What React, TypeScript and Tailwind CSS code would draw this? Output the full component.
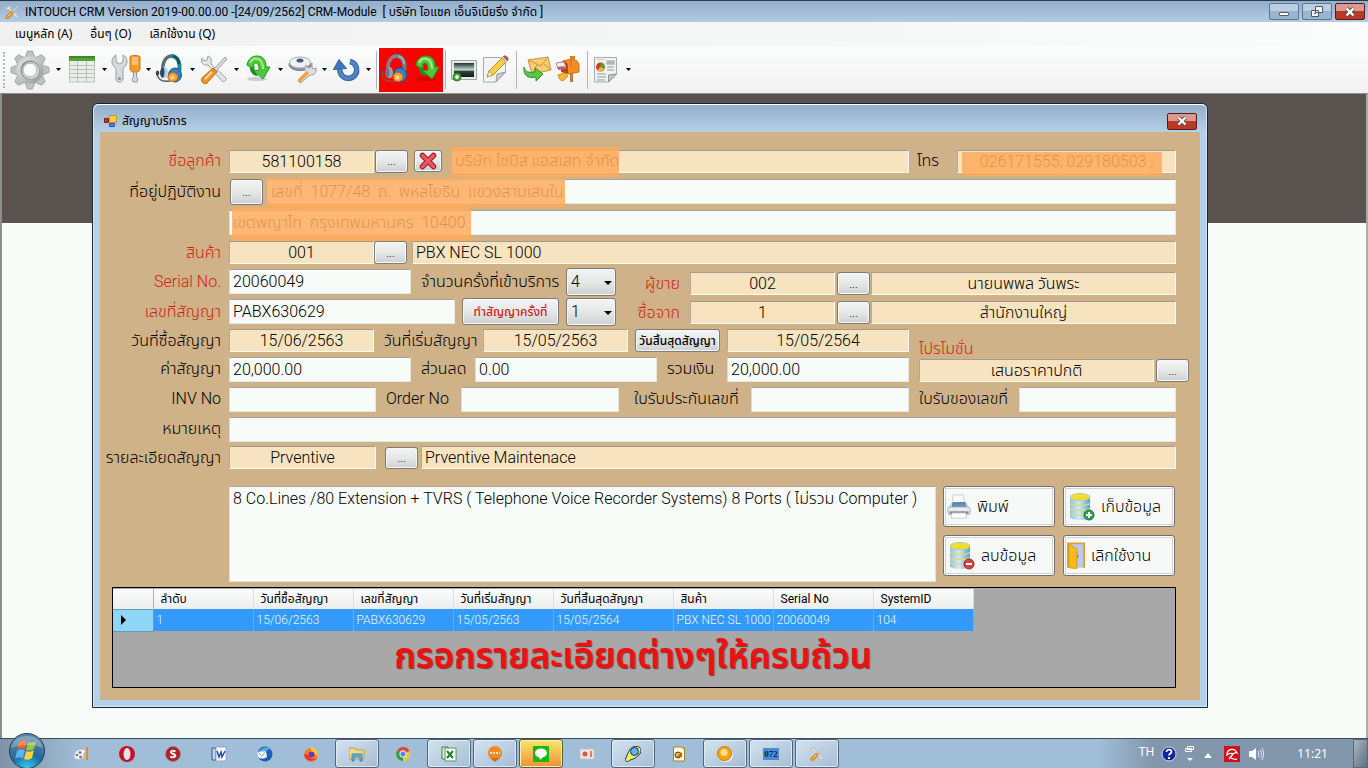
import React, { ReactElement, ReactNode } from "react";

const thin = "font-['Roboto','Noto_Sans_Thai','Noto_Sans',sans-serif] font-light";

interface FieldProps {
  id: string;
  label: string;
  value?: string;
  className?: string;
  tone?: "beige" | "white";
  center?: boolean;
  veil?: string;
}

function Field({ id, label, value = "", className = "", tone = "white", center, veil }: FieldProps): ReactElement {
  const look =
    tone === "beige"
      ? "h-[23px] bg-[#f7e3c0] border-t-[#a39c8e] border-l-[#b5aa95] border-r-[#fffaf0] border-b-[#fffaf0]"
      : "h-[25px] bg-[#f8fcf9] border-t-[#a8a49c] border-l-[#dcdcd4] border-r-[#e4e8e4] border-b-[#e4e8e4]";
  return (
    <div className={`relative min-w-0 ${className}`}>
      <input
        id={id}
        aria-label={label}
        defaultValue={value}
        className={`block w-full border text-[16px] leading-5 px-[3px] text-black outline-none ${look} ${
          center ? "text-center" : ""
        }`}
      />
      {veil && <span className={`absolute bg-[#ffab5c]/85 pointer-events-none ${veil}`} />}
    </div>
  );
}

interface LabelProps {
  htmlFor?: string;
  children: ReactNode;
  red?: boolean;
  left?: boolean;
  className?: string;
}

function Label({ htmlFor, children, red, left, className = "" }: LabelProps): ReactElement {
  return (
    <label
      htmlFor={htmlFor}
      className={`shrink-0 whitespace-nowrap text-[16px] leading-5 ${left ? "text-left" : "text-right"} ${
        red ? "text-[#d01f14]" : "text-black"
      } ${className}`}
    >
      {children}
    </label>
  );
}

const pushButton =
  "shrink-0 rounded-[3px] border border-[#7c7c78] bg-linear-to-b from-[#f3f4f4] via-[#e6e8e8] via-50% to-[#cdd0d0] shadow-[inset_0_0_0_1px_#f8f8f8] text-black";

function Dots({ title, className = "h-[23px]" }: { title: string; className?: string }): ReactElement {
  return (
    <button type="button" aria-label={title} className={`${pushButton} w-[33px] text-[12px] leading-4 ${className}`}>
      ...
    </button>
  );
}

function Pick({ id, label, value }: { id: string; label: string; value: string }): ReactElement {
  return (
    <div className="relative ml-auto w-[50px] shrink-0">
      <select
        id={id}
        aria-label={label}
        defaultValue={value}
        className={`${pushButton} h-[28px] w-full appearance-none pl-1 text-[16px]`}
      >
        <option>{value}</option>
      </select>
      <svg viewBox="0 0 8 4" className="pointer-events-none absolute right-1 top-[13px] h-1 w-2">
        <path d="M0 0h8L4 4z" />
      </svg>
    </div>
  );
}

function CloseGlyph(): ReactElement {
  return (
    <svg viewBox="0 0 12 10" className="h-[10px] w-3">
      <path d="M2.500 1.500 9.500 8.500M9.500 1.500 2.500 8.500" stroke="#5b4a50" strokeWidth="4" />
      <path d="M2.500 1.500 9.500 8.500M9.500 1.500 2.500 8.500" stroke="#fff" strokeWidth="2.400" />
    </svg>
  );
}

/* ---- drawings ---- */

function Gear(): ReactElement {
  return (
    <svg viewBox="0 0 40 40" className="h-10 w-10">
      <defs>
        <linearGradient id="gearMetal" x1="0" y1="0" x2="1" y2="1">
          <stop offset="0" stopColor="#e2e3e3" />
          <stop offset=".5" stopColor="#c3c5c5" />
          <stop offset="1" stopColor="#8f9191" />
        </linearGradient>
      </defs>
      <g fill="#c0c2c2" stroke="#9a9c9c" strokeWidth=".8">
        {[0, 45, 90, 135].map((a) => (
          <path key={a} d="M14.500 9 17.500 1h5l3 8v22l-3 8h-5l-3-8z" transform={`rotate(${a} 20 20)`} />
        ))}
      </g>
      <circle cx="20" cy="20" r="13.500" fill="url(#gearMetal)" />
      <circle cx="20" cy="20" r="9.500" fill="#8c8f8f" />
      <circle cx="20.500" cy="20.500" r="8.500" fill="#dfe1e1" />
      <circle cx="20" cy="20" r="7" fill="#fafbfb" stroke="#a5a7a7" />
    </svg>
  );
}

function Sheet(): ReactElement {
  return (
    <svg viewBox="0 0 32 32" className="h-8 w-8">
      <path d="M3.500 3h25v25h-25z" fill="#eceeec" stroke="#bcbfbd" />
      <path d="M3.500 11.500h25M3.500 15.500h25M3.500 19.500h25M3.500 23.500h25M11.500 7v21M20.500 7v21" stroke="#bcc0bd" />
      <path d="M3 2h26v5H3z" fill="#55a235" />
      <path d="M3 2h26v2H3z" fill="#3f8a22" />
    </svg>
  );
}

function Tools(): ReactElement {
  return (
    <svg viewBox="0 0 32 32" className="h-8 w-8">
      <path
        d="M6 1C2 3 1 8 3 11c1 2 3 3 3 4v10c0 4 7 4 7 0V15c0-1 2-2 3-4 2-3 1-8-3-10v7l-3.500 2L6 8z"
        fill="#d8dadb"
        stroke="#999c9f"
      />
      <circle cx="9.500" cy="24.500" r="1.500" fill="#8a8d90" />
      <path d="M20 3c0-2 10-2 10 0v12c0 2-2 2-2 3h-6c0-1-2-1-2-3z" fill="#f39a26" stroke="#cf7a10" />
      <path d="M22 3h6v8h-6z" fill="#fcc274" />
      <path d="M23.500 18h3v5l1.500 2-1 3h-4l-1-3 1.500-2z" fill="#d5d7d9" stroke="#96999c" />
    </svg>
  );
}

function Headset({ dim }: { dim?: boolean }): ReactElement {
  return (
    <svg viewBox="0 0 32 32" className="h-8 w-8">
      <path d="M9 17C8 8 12 2 18 2" fill="none" stroke={dim ? "#8c7f8b" : "#5c6c70"} strokeWidth="3.500" />
      <path d="M17 2c6 0 10 6 8 16" fill="none" stroke={dim ? "#5f8397" : "#1e8a96"} strokeWidth="4" />
      <path d="M19 2c4 1 6 4 6 8" fill="none" stroke={dim ? "#8fb0c0" : "#174a55"} strokeWidth="2" />
      <path d="M9 13c3-1 5 2 5 6s-2 6-5 5z" fill={dim ? "#9a9fae" : "#b9d3e2"} />
      <path d="M9 13c2 2 2 8 0 11-4-1-4-9 0-11z" fill={dim ? "#6f7486" : "#2b4a66"} />
      <path d="M3 20c1 6 6 8 13 7" fill="none" stroke={dim ? "#a3444c" : "#4c5a66"} strokeWidth="1.500" />
      <ellipse cx="3.500" cy="19" rx="1.800" ry="2.500" fill={dim ? "#6b4a54" : "#3c464f"} />
      <ellipse cx="21" cy="21" rx="6.500" ry="7" fill="#2f82c4" stroke="#1f5484" />
      <ellipse cx="19" cy="23" rx="5" ry="4.500" fill="#f3a338" stroke="#b56c12" />
      <circle cx="18.500" cy="23.500" r="2" fill="#fbd18c" />
    </svg>
  );
}

function Crossed({ small }: { small?: boolean }): ReactElement {
  return (
    <svg viewBox="0 0 32 32" className={small ? "h-4 w-4" : "h-8 w-8"}>
      <path d="M10 2l-1 4-3 1-2-3c-2 4 1 8 6 7l14 16c2 2 5-1 4-3L13 10c1-4 0-7-3-8z" fill="#e4e6e7" stroke="#9da1a4" />
      <path d="M27 3l2 2-11 12-2-2z" fill="#d6d9db" stroke="#a1a5a8" />
      <path d="M15 14l4 4L9 29c-3 2-7-1-5-5z" fill="#f0922a" stroke="#c06c12" />
      <path d="M14 18 7 25" stroke="#fdd79a" strokeWidth="2" />
    </svg>
  );
}

function GreenArrow(): ReactElement {
  return (
    <svg viewBox="0 0 32 32" className="h-8 w-8">
      <ellipse cx="15" cy="25" rx="10" ry="2" fill="#000" opacity=".16" />
      <path d="M8 11l4-1c0 5 1 8 4 12-5 0-9-4-8-11z" fill="#1d8a28" />
      <path
        d="M5 11C6 5 10 2 15 2c6 0 9 4 9 11h4l-7 12-9-8 5-1c0-4-1-7-3-7-3 0-2 2-2 5-2 0-5-1-7-3z"
        fill="#4cc83a"
        stroke="#259a24"
      />
      <path d="M8 9c2-4 5-5 8-4 4 1 5 4 5 10" fill="none" stroke="#a8ee84" strokeWidth="2" />
    </svg>
  );
}

function DiscWrench(): ReactElement {
  return (
    <svg viewBox="0 0 32 32" className="h-8 w-8">
      <ellipse cx="14" cy="10.500" rx="11" ry="6" fill="#8995a8" stroke="#6e788a" />
      <ellipse cx="14" cy="8.500" rx="10.500" ry="5.500" fill="#eef0f4" stroke="#a5adb9" />
      <ellipse cx="14" cy="6.500" rx="3.500" ry="2" fill="#475a7c" />
      <path d="M26 9l-1 4-3 1-2-3c-2 3-1 6 1 7l-8 7c-2 2 1 5 3 3l8-7c4 1 7-3 6-7l-3 1-1-2z" fill="#dcdee0" stroke="#9a9da1" />
      <path d="M21 19 14 26" stroke="#f2a03c" strokeWidth="3.500" strokeLinecap="round" />
    </svg>
  );
}

function Refresh(): ReactElement {
  return (
    <svg viewBox="0 0 32 32" className="h-8 w-8">
      <path d="M20 7.500A8.500 8.500 0 1 1 9.800 15" fill="none" stroke="#2f62a8" strokeWidth="5.500" />
      <path d="M20 7.500A8.500 8.500 0 1 1 9.800 15" fill="none" stroke="#4f84c6" strokeWidth="3.500" />
      <path d="M3.500 15.500 9 5.500l7.500 9z" fill="#3f76bd" stroke="#2f62a8" />
    </svg>
  );
}

function Picture(): ReactElement {
  return (
    <svg viewBox="0 0 32 32" className="h-8 w-8">
      <defs>
        <linearGradient id="dusk" x1="0" y1="0" x2="0" y2="1">
          <stop offset="0" stopColor="#20302f" />
          <stop offset=".5" stopColor="#c6dccf" />
          <stop offset=".6" stopColor="#30443a" />
          <stop offset="1" stopColor="#101a16" />
        </linearGradient>
      </defs>
      <path d="M3.500 6.500h25v19h-25z" fill="#e6e9e9" stroke="#a2a6a6" />
      <path d="M6 9h20v14H6z" fill="url(#dusk)" />
      <circle cx="9" cy="23" r="4" fill="#4aa83a" stroke="#2d7a22" />
      <path d="M9 21v4M7 23h4" stroke="#fff" strokeWidth="1.500" />
    </svg>
  );
}

function Pencil(): ReactElement {
  return (
    <svg viewBox="0 0 32 32" className="h-8 w-8">
      <path d="M3.500 3.500h22V18L16 28H3.500z" fill="#f3f4f4" stroke="#a7aaaa" />
      <path d="M16 28l1-8 8.500-2z" fill="#c9cccc" stroke="#999c9c" />
      <path d="M22 4l4 4-13 13-6 2 2-6z" fill="#f5cf4a" stroke="#bd9226" />
      <path d="M9 17l4 4-6 2z" fill="#f6e6c6" stroke="#8d7443" strokeWidth=".5" />
      <path d="M22 4l1.500-1.500 4 4L26 8z" fill="#c4c8cb" />
      <path d="M23.500 2.500c2-2 6 2 4 4z" fill="#e05a64" stroke="#b5333d" />
    </svg>
  );
}

function MailOut(): ReactElement {
  return (
    <svg viewBox="0 0 32 32" className="h-8 w-8">
      <path d="M7 6 27 3l3 13-19 4z" fill="#f7cc73" stroke="#c8953a" />
      <path d="M7 6l13 6 7-9M11 20l5-9M30 16l-7-6" fill="none" stroke="#c8953a" />
      <path d="M3 13c1 5 5 6 11 5v-4l8 6-7 7v-4C7 25 2 21 3 13z" fill="#5fc646" stroke="#2f8f26" />
    </svg>
  );
}

function Mailbox(): ReactElement {
  return (
    <svg viewBox="0 0 32 32" className="h-8 w-8">
      <path d="M17 17h3v11h-3z" fill="#c27b3b" />
      <path d="M10 7c2-1 10-2 12-1 3 1 4 4 4 6v6l-11 2z" fill="#f28e22" stroke="#c86c10" />
      <path d="M8 8c4-2 7 1 7 5v7l-7-2z" fill="#b9420f" />
      <path d="M3 9l8-1 2 5-8 2z" fill="#f5f0ee" stroke="#b58a9a" />
      <path d="M4 13l7-1 2 3-7 1z" fill="#c25c86" />
      <path d="M5 21l7-2 3 3-4 4c-3 2-5-1-6-5z" fill="#f9b53a" stroke="#d98c16" />
      <path d="M17 12V2h5v3h-3v7z" fill="#e5791a" />
    </svg>
  );
}

function Report(): ReactElement {
  return (
    <svg viewBox="0 0 32 32" className="h-8 w-8">
      <path d="M4.500 3.500h22V20l-8 8h-14z" fill="#f1f2f2" stroke="#a7abab" />
      <path d="M7 5.500h8" stroke="#c9cdd0" />
      <path d="M17 7h7v3h-7zM17 13h7M17 16h7M7 20h9M7 23h9M7 26h8" fill="#aeb3b7" stroke="#b4b9bd" strokeWidth="1.500" />
      <circle cx="10.500" cy="13" r="4.500" fill="#d63a22" />
      <path d="M10.500 13V8.500A4.500 4.500 0 0 1 14.500 15z" fill="#4ea33a" />
      <path d="M10.500 13l4 2a4.500 4.500 0 0 1-7 1z" fill="#f4b52c" />
      <path d="M18.500 28v-7l8-1z" fill="#c9cccc" stroke="#8f9393" />
    </svg>
  );
}

function Printer(): ReactElement {
  return (
    <svg viewBox="0 0 28 30" className="h-[30px] w-6">
      <path d="M7 1h12l2 11H6z" fill="#fbfbfb" stroke="#c4c8cc" />
      <path d="M3 15l3-5h16l3 5z" fill="#dfe3e6" stroke="#b3b8bd" />
      <path d="M7 10h14l1 7H6z" fill="#5a93bf" stroke="#3f7199" />
      <rect x="1" y="15" width="26" height="9" rx="3" fill="#e8eaee" stroke="#a3a8b0" />
      <path d="M3 20h22v3H3z" fill="#858b9a" />
      <path d="M6 22h16l1 6H5z" fill="#fff" stroke="#c5c8cc" />
    </svg>
  );
}

function Database({ minus }: { minus?: boolean }): ReactElement {
  return (
    <svg viewBox="0 0 28 30" className="h-[30px] w-7">
      <defs>
        <linearGradient id="drum" x1="0" x2="1">
          <stop offset="0" stopColor="#8fc4e4" />
          <stop offset=".45" stopColor="#d5e9f4" />
          <stop offset="1" stopColor="#5f9fcb" />
        </linearGradient>
      </defs>
      <path d="M3 5v20c0 4 20 4 20 0V5z" fill="url(#drum)" />
      <path d="M3 11c0 3 20 3 20 0M3 16c0 3 20 3 20 0M3 21c0 3 20 3 20 0" fill="none" stroke="#dcd978" strokeWidth="1.500" />
      <ellipse cx="13" cy="5" rx="10" ry="3.500" fill="#f0df2c" stroke="#b9cfa0" />
      <circle cx="22" cy="23" r="5" fill={minus ? "#d8403c" : "#2fa04a"} stroke={minus ? "#a82220" : "#157a30"} />
      <path d={minus ? "M19 23h6" : "M19 23h6M22 20v6"} stroke="#fff" strokeWidth="2" />
    </svg>
  );
}

function Door(): ReactElement {
  return (
    <svg viewBox="0 0 20 30" className="h-[30px] w-[18px]">
      <path d="M1 28V1h18v27" fill="#bccbe8" stroke="#e0a030" strokeWidth="2" />
      <path d="M2 2l9 5v22l-9-1z" fill="#fcb81f" stroke="#dd9310" />
      <path d="M12 14v3" stroke="#7484a6" strokeWidth="1.500" />
    </svg>
  );
}

const Svg16 = ({ children }: { children: ReactNode }): ReactElement => (
  <svg viewBox="0 0 16 16" className="h-4 w-4">
    {children}
  </svg>
);

const tasks: { name: string; style?: "open" | "alert"; icon: ReactNode }[] = [
  {
    name: "Paint",
    icon: (
      <Svg16>
        <path d="M1 10c0-6 8-9 12-5-1 2-3 2-2 5s-10 6-10 0z" fill="#eef3f7" stroke="#a9bccb" />
        <circle cx="4" cy="9" r="1.300" fill="#4a9c46" />
        <circle cx="7" cy="6.500" r="1.300" fill="#3668c8" />
        <circle cx="7.500" cy="11" r="1.300" fill="#d9472d" />
        <path d="M14 1v13" stroke="#e48a2a" strokeWidth="2" />
      </Svg16>
    ),
  },
  {
    name: "Opera",
    icon: (
      <Svg16>
        <ellipse cx="8" cy="8" rx="8" ry="8" fill="#c8102a" />
        <ellipse cx="8" cy="8" rx="3.500" ry="6" fill="#e4e3ea" />
      </Svg16>
    ),
  },
  {
    name: "S Player",
    icon: (
      <Svg16>
        <circle cx="8" cy="8" r="7.500" fill="#b32025" stroke="#8e8a92" strokeWidth=".8" />
        <path d="M10.500 5.500C8 4 5.500 5 6 6.500S10 8 10.300 9.500 7.500 12 5.300 10.500" fill="none" stroke="#fff" strokeWidth="2" />
      </Svg16>
    ),
  },
  {
    name: "Word",
    icon: (
      <Svg16>
        <path d="M1 2h4v12H1z" fill="#c7d6ec" stroke="#2b569a" />
        <path d="M5 1h10v14H5z" fill="#fff" stroke="#8fa5c6" />
        <path d="M6 5l2 6 2-5 1 5 3-6" fill="none" stroke="#23509b" strokeWidth="1.500" />
      </Svg16>
    ),
  },
  {
    name: "Thunderbird",
    icon: (
      <Svg16>
        <circle cx="8" cy="8" r="7.500" fill="#1d5fb4" />
        <path d="M1 7c2-5 9-7 13-4-3 0-4 1-4 2z" fill="#56a8ea" />
        <path d="M0 6l9-1 1 6c-3 2-7 2-9 0z" fill="#f4f6f8" />
        <path d="M1 6l4 4 4-5" fill="none" stroke="#9fb2c6" />
      </Svg16>
    ),
  },
  {
    name: "Firefox",
    icon: (
      <Svg16>
        <circle cx="8" cy="9" r="7" fill="#ff7a1e" />
        <path d="M8 0c5 3 8 6 6 11-1-3-3-5-6-5z" fill="#ffca2e" />
        <path d="M1 8c1 7 9 9 13 4-3 2-8 1-9-3z" fill="#e8313c" />
        <circle cx="8.500" cy="8.500" r="3" fill="#6a3bb8" />
      </Svg16>
    ),
  },
  {
    name: "Explorer",
    style: "open",
    icon: (
      <Svg16>
        <path d="M0 2h6l1 2h8v9H0z" fill="#f3dc7e" stroke="#bf9f3c" />
        <path d="M3 8h10v7h-2v-4H5v4H3z" fill="#5fb6dc" stroke="#3a86ac" />
      </Svg16>
    ),
  },
  {
    name: "Chrome",
    icon: (
      <Svg16>
        <circle cx="8" cy="8" r="7" fill="#f7c52d" />
        <path d="M8 8 2 4.500a7 7 0 0 1 12.500.500z" fill="#dd4b3e" />
        <path d="M8 8 2 4.500A7 7 0 0 0 8 15z" fill="#2ea04c" />
        <circle cx="8" cy="8" r="3.200" fill="#4a8af4" stroke="#fff" />
      </Svg16>
    ),
  },
  {
    name: "Excel",
    style: "open",
    icon: (
      <Svg16>
        <path d="M1 1h6v12H1z" fill="#e4f1e2" stroke="#2f8a3a" />
        <path d="M4 2h11v13H4z" fill="#fff" stroke="#4a9a50" />
        <path d="M6 5l6 7M12 5l-6 7" stroke="#1f7d30" strokeWidth="2" />
      </Svg16>
    ),
  },
  {
    name: "Chat",
    style: "open",
    icon: (
      <Svg16>
        <circle cx="8" cy="7" r="7" fill="#f08a24" />
        <path d="M8 16 3 12h10z" fill="#d76a12" />
        <path d="M3 7h10" stroke="#fff" strokeWidth="1.500" strokeDasharray="2 1" />
      </Svg16>
    ),
  },
  {
    name: "LINE",
    style: "alert",
    icon: (
      <Svg16>
        <rect width="16" height="16" rx="1" fill="#1cb60e" />
        <ellipse cx="8" cy="7" rx="6" ry="4.500" fill="#fff" />
        <path d="M6 10h5l-4 4z" fill="#fff" />
      </Svg16>
    ),
  },
  {
    name: "Presentation",
    icon: (
      <Svg16>
        <path d="M1 3h14v10H1z" fill="#ece7e6" stroke="#c9c2c2" />
        <circle cx="6" cy="8" r="2.500" fill="#dc5a30" />
        <path d="M11 5h2v6h-2z" fill="#e08050" />
      </Svg16>
    ),
  },
  {
    name: "Rocket",
    style: "open",
    icon: (
      <Svg16>
        <path d="M14 1c-5-2-9 1-11 6l-3 7c1 2 3 2 5 0 5-1 11-5 11-10 0-1-1-2-2-3z" fill="#f2ee62" stroke="#1a2f60" />
        <circle cx="9.500" cy="5.500" r="4" fill="#63b6ea" stroke="#1a2f60" />
      </Svg16>
    ),
  },
  {
    name: "Draw",
    icon: (
      <Svg16>
        <path d="M2.500 1h8l3 3v11h-11z" fill="#fffbe6" stroke="#a5851c" />
        <path d="M10.500 1h4v4z" fill="#c9a42c" />
        <circle cx="7" cy="9" r="3" fill="#e6b437" stroke="#5a4510" />
        <path d="M6 11l5-5v5z" fill="#d9532a" />
      </Svg16>
    ),
  },
  {
    name: "Coin",
    style: "open",
    icon: (
      <Svg16>
        <circle cx="9" cy="9" r="7" fill="#e9edf2" />
        <circle cx="7.500" cy="7.500" r="7" fill="#f7a414" stroke="#ca7a08" />
        <circle cx="7" cy="6.500" r="3.500" fill="#ffe08a" />
      </Svg16>
    ),
  },
  {
    name: "072",
    style: "open",
    icon: <span className="bg-[#4a8cdc] px-px font-['Liberation_Serif',serif] text-[9px] font-bold leading-3 text-[#101c3c]">072</span>,
  },
  { name: "INTOUCH CRM", style: "open", icon: <Crossed small /> },
];

function Arrow(): ReactElement {
  return (
    <svg viewBox="0 0 5 3" className="h-[3px] w-[5px]">
      <path d="M0 0h5L2.500 3z" />
    </svg>
  );
}

function Tool({ name, arrow, children }: { name: string; arrow?: boolean; children: ReactNode }): ReactElement {
  return (
    <button type="button" aria-label={name} className="flex items-center">
      {children}
      {arrow && (
        <span className="flex w-3 justify-center">
          <Arrow />
        </span>
      )}
    </button>
  );
}

const Sep = () => <span className="mx-[2px] h-[38px] w-px bg-[#b4b6b6]" />;

const caption =
  "flex h-[17px] w-[30px] items-center justify-center rounded-[2px] border border-[#5c7690] bg-linear-to-b from-[#bccfe2] from-50% to-[#9ab4cf] to-50%";
const closeCaption =
  "flex h-[17px] w-[30px] items-center justify-center rounded-[2px] border border-[#5a1a1c] bg-linear-to-b from-[#dd9a90] from-50% to-[#b83a26] to-50%";

function TopBars(): ReactElement {
  return (
    <>
      <header className="flex h-[22px] items-center border-t border-[#2b3d50] bg-linear-to-b from-[#93aecb] to-[#b3cce4] pl-1 pr-[3px] font-['Roboto','Noto_Sans_Thai',sans-serif] text-[12px] leading-4 text-black">
        <Crossed small />
        <h1 className="ml-[5px] whitespace-pre">
          {"INTOUCH CRM Version 2019-00.00.00 -[24/09/2562] CRM-Module  [ บริษัท ไอแซค เอ็นจิเนียริ่ง จำกัด ]"}
        </h1>
        <div className="ml-auto flex gap-[3px]">
          <button type="button" aria-label="Minimize" className={caption}>
            <span className="mt-1 h-1 w-[10px] rounded-[1px] border border-[#555e68] bg-white" />
          </button>
          <button type="button" aria-label="Restore" className={caption}>
            <svg viewBox="0 0 12 11" className="h-[11px] w-3">
              <path d="M4.500.500h7v6h-7zM.500 4.500h7v6h-7z" fill="#f4f7fa" stroke="#4e5862" />
              <path d="M3 7h2v1H3z" fill="#4e5862" />
            </svg>
          </button>
          <button type="button" aria-label="Close" className={closeCaption}>
            <CloseGlyph />
          </button>
        </div>
      </header>
      <nav className="flex h-6 items-center gap-[18px] bg-linear-to-r from-[#f0f0f0] to-[#fafcfb] pl-[15px] text-[12px] leading-4">
        <button type="button">เมนูหลัก (A)</button>
        <button type="button">อื่นๆ (O)</button>
        <button type="button">เลิกใช้งาน (Q)</button>
      </nav>
      <div className="flex h-12 items-center border-b border-[#8e8e8c] bg-linear-to-b from-[#fbfcfc] to-[#f1f2f1] pl-[3px]">
        <span className="mr-[5px] h-9 border-l-2 border-dotted border-[#b8b8b8]" />
        <button type="button" aria-label="Settings" className="flex items-center">
          <Gear />
          <span className="flex w-4 justify-center">
            <Arrow />
          </span>
        </button>
        <Tool name="Table" arrow><Sheet /></Tool>
        <Tool name="Tools" arrow><Tools /></Tool>
        <Tool name="Service" arrow><Headset /></Tool>
        <Tool name="Repair" arrow><Crossed /></Tool>
        <Tool name="Receive" arrow><GreenArrow /></Tool>
        <Tool name="Maintenance" arrow><DiscWrench /></Tool>
        <Tool name="Refresh" arrow><Refresh /></Tool>
        <Sep />
        <div className="flex h-11 items-center bg-[#f80400]">
          <Tool name="Call service"><Headset dim /></Tool>
          <Tool name="Call return"><GreenArrow /></Tool>
        </div>
        <Sep />
        <Tool name="Add picture"><Picture /></Tool>
        <Tool name="Edit"><Pencil /></Tool>
        <span className="mx-1 h-[38px] w-px bg-[#b4b6b6]" />
        <Tool name="Send mail"><MailOut /></Tool>
        <Tool name="Mailbox"><Mailbox /></Tool>
        <Sep />
        <Tool name="Report" arrow><Report /></Tool>
      </div>
    </>
  );
}

function ContractForm(): ReactElement {
  const first = "mr-2 w-[121px]";
  return (
    <form className={`flex flex-col pr-6 pt-[14px] ${thin}`}>
      <div className="flex h-[30px] items-center">
        <Label htmlFor="customer" red className={first}>ชื่อลูกค้า</Label>
        <Field id="customer" label="ชื่อลูกค้า" value="581100158" tone="beige" center className="w-[145px]" />
        <Dots title="เลือกลูกค้า" className="ml-px h-[23px]" />
        <button type="button" aria-label="ล้าง" className={`${pushButton} ml-[6px] mr-[9px] flex h-[22px] w-7 items-center justify-center`}>
          <svg viewBox="0 0 18 18" className="h-[18px] w-[18px]">
            <path d="M3.500 3.500l11 11M14.500 3.500l-11 11" stroke="#8c1f28" strokeWidth="5.500" strokeLinecap="round" />
            <path d="M3.500 3.500l11 11M14.500 3.500l-11 11" stroke="#f0535c" strokeWidth="3.500" strokeLinecap="round" />
          </svg>
        </button>
        <Field id="customerName" label="ชื่อบริษัท" value="บริษัท ไซมิส แอสเสท จำกัด" tone="beige" className="flex-1" veil="-top-[3px] left-0 h-[30px] w-[168px]" />
        <Label htmlFor="phone" left className="mx-2 w-8">โทร</Label>
        <Field id="phone" label="โทร" value="026171555, 029180503 ," tone="beige" center className="w-[219px]" veil="left-[5px] right-[14px] top-[2px] h-6" />
      </div>
      <div className="flex h-[31px] items-center">
        <Label htmlFor="address" className={first}>ที่อยู่ปฏิบัติงาน</Label>
        <Dots title="เลือกที่อยู่" className="ml-px mr-1 h-[26px]" />
        <Field id="address" label="ที่อยู่ปฏิบัติงาน" value={"เลขที่  1077/48  ถ.  พหลโยธิน  แขวงสามเสนใน"} className="flex-1" veil="-top-px left-0 h-[29px] w-[298px]" />
      </div>
      <div className="flex h-[31px] items-center pl-[129px]">
        <Field id="address2" label="ที่อยู่ (ต่อ)" value={"เขตพญาไท  กรุงเทพมหานคร  10400"} className="flex-1" veil="-top-[3px] left-[3px] h-[34px] w-[239px]" />
      </div>
      <div className="flex h-[29px] items-center">
        <Label htmlFor="product" red className={first}>สินค้า</Label>
        <Field id="product" label="สินค้า" value="001" tone="beige" center className="w-[145px]" />
        <Dots title="เลือกสินค้า" className="mr-[5px] h-[23px]" />
        <Field id="productName" label="ชื่อสินค้า" value="PBX NEC SL 1000" tone="beige" className="flex-1" />
      </div>

      <div className="flex">
        <div className="flex w-[516px] shrink-0 flex-col">
          <div className="flex h-[29px] items-center">
            <Label htmlFor="serial" red className={first}>Serial No.</Label>
            <Field id="serial" label="Serial No." value="20060049" className="w-[182px]" />
            <Label htmlFor="visits" className="ml-[10px]">จำนวนครั้งที่เข้าบริการ</Label>
            <Pick id="visits" label="จำนวนครั้งที่เข้าบริการ" value="4" />
          </div>
          <div className="flex h-[31px] items-center">
            <Label htmlFor="contract" red className={first}>เลขที่สัญญา</Label>
            <Field id="contract" label="เลขที่สัญญา" value="PABX630629" className="w-[226px]" />
            <button type="button" className={`${pushButton} ml-[7px] h-[27px] w-[97px] text-[12px] font-medium leading-4 !text-[#d01f14]`}>
              ทำสัญญาครั้งที่
            </button>
            <Pick id="round" label="ครั้งที่" value="1" />
          </div>
        </div>
        <div className="flex flex-1 flex-col pt-[2px]">
          <div className="flex h-[29px] items-center">
            <Label htmlFor="seller" red className="mr-[10px] w-16">ผู้ขาย</Label>
            <Field id="seller" label="ผู้ขาย" value="002" tone="beige" center className="w-[145px]" />
            <Dots title="เลือกผู้ขาย" className="ml-[2px] h-[23px]" />
            <Field id="sellerName" label="ชื่อผู้ขาย" value="นายนพพล วันพระ" tone="beige" center className="ml-px flex-1" />
          </div>
          <div className="flex h-[29px] items-center">
            <Label htmlFor="from" red className="mr-[10px] w-16">ซื้อจาก</Label>
            <Field id="from" label="ซื้อจาก" value="1" tone="beige" center className="w-[145px]" />
            <Dots title="เลือกสาขา" className="ml-[2px] h-[23px]" />
            <Field id="fromName" label="ชื่อสาขา" value="สำนักงานใหญ่" tone="beige" center className="ml-px flex-1" />
          </div>
        </div>
      </div>

      <div className="flex">
        <div className="flex flex-1 flex-col">
          <div className="flex h-[27px] items-center">
            <Label htmlFor="buyDate" className={first}>วันที่ซื้อสัญญา</Label>
            <Field id="buyDate" label="วันที่ซื้อสัญญา" value="15/06/2563" tone="beige" center className="w-[145px]" />
            <Label htmlFor="startDate" left className="mx-[10px] w-[89px]">วันที่เริ่มสัญญา</Label>
            <Field id="startDate" label="วันที่เริ่มสัญญา" value="15/05/2563" tone="beige" center className="w-[145px]" />
            <button type="button" className={`${pushButton} mx-[7px] h-[23px] w-[85px] whitespace-nowrap text-[12px] font-medium leading-4`}>
              วันสิ้นสุดสัญญา
            </button>
            <Field id="endDate" label="วันสิ้นสุดสัญญา" value="15/05/2564" tone="beige" center className="flex-1" />
          </div>
          <div className="flex h-[30px] items-center">
            <Label htmlFor="fee" className={first}>ค่าสัญญา</Label>
            <Field id="fee" label="ค่าสัญญา" value="20,000.00" className="w-[182px]" />
            <Label htmlFor="discount" left className="mx-[10px] w-11">ส่วนลด</Label>
            <Field id="discount" label="ส่วนลด" value="0.00" className="w-[182px]" />
            <Label htmlFor="total" left className="mx-[10px] w-[50px]">รวมเงิน</Label>
            <Field id="total" label="รวมเงิน" value="20,000.00" className="flex-1" />
          </div>
        </div>
        <div className="-mr-[13px] ml-[10px] flex w-[270px] flex-col pt-3">
          <Label htmlFor="promo" red left>โปรโมชั่น</Label>
          <div className="flex">
            <Field id="promo" label="โปรโมชั่น" value="เสนอราคาปกติ" tone="beige" center className="mr-[2px] flex-1" />
            <Dots title="เลือกโปรโมชั่น" />
          </div>
        </div>
      </div>

      <div className="flex h-[30px] items-center">
        <Label htmlFor="inv" className={first}>INV No</Label>
        <Field id="inv" label="INV No" className="w-[147px]" />
        <Label htmlFor="order" left className="mx-[10px] w-[65px]">Order No</Label>
        <Field id="order" label="Order No" className="w-[158px]" />
        <Label htmlFor="warranty" left className="ml-[15px] mr-[10px] w-[107px]">ใบรับประกันเลขที่</Label>
        <Field id="warranty" label="ใบรับประกันเลขที่" className="flex-1" />
        <Label htmlFor="receipt" left className="mx-[10px] w-[90px]">ใบรับของเลขที่</Label>
        <Field id="receipt" label="ใบรับของเลขที่" className="w-[157px]" />
      </div>
      <div className="flex h-[30px] items-center">
        <Label htmlFor="remark" className={first}>หมายเหตุ</Label>
        <Field id="remark" label="หมายเหตุ" className="flex-1" />
      </div>
      <div className="flex h-[27px] items-center">
        <Label htmlFor="detail" className={first}>รายละเอียดสัญญา</Label>
        <Field id="detail" label="รายละเอียดสัญญา" value="Prventive" tone="beige" center className="w-[147px]" />
        <Dots title="เลือกรายละเอียด" className="ml-[9px] mr-[3px] h-[22px]" />
        <Field id="detailName" label="รายละเอียด" value="Prventive Maintenace" tone="beige" className="flex-1" />
      </div>

      <div className="mt-[15px] flex pl-[129px]">
        <textarea
          aria-label="รายละเอียดเพิ่มเติม"
          className="h-24 min-w-0 flex-1 resize-none border border-[#e0e2dc] border-t-[#a8a49c] bg-[#f8fcf9] px-[3px] py-[2px] text-[16px] leading-5 outline-none"
          defaultValue="8 Co.Lines /80 Extension + TVRS ( Telephone Voice Recorder Systems) 8 Ports ( ไม่รวม Computer )"
        />
        <div className="ml-[7px] mr-px grid grid-cols-2 content-start gap-2">
          <Action label="พิมพ์"><Printer /></Action>
          <Action label="เก็บข้อมูล"><Database /></Action>
          <Action label="ลบข้อมูล"><Database minus /></Action>
          <Action label="เลิกใช้งาน"><Door /></Action>
        </div>
      </div>
    </form>
  );
}

function Action({ label, children }: { label: string; children: ReactNode }): ReactElement {
  return (
    <button
      type="button"
      className="flex h-[41px] w-28 items-center gap-[6px] rounded-[3px] border border-[#70706c] bg-[#f6f9f7] pl-[3px] text-[16px] leading-5 shadow-[inset_0_0_0_1px_#fff,inset_0_0_0_2px_#cfd2d6]"
    >
      {children}
      {label}
    </button>
  );
}

const columns = [
  { title: "ลำดับ", value: "1", width: "w-[100px]" },
  { title: "วันที่ซื้อสัญญา", value: "15/06/2563", width: "w-[100px]" },
  { title: "เลขที่สัญญา", value: "PABX630629", width: "w-[100px]" },
  { title: "วันที่เริ่มสัญญา", value: "15/05/2563", width: "w-[100px]" },
  { title: "วันที่สิ้นสุดสัญญา", value: "15/05/2564", width: "w-[120px]" },
  { title: "สินค้า", value: "PBX NEC SL 1000", width: "w-[100px]" },
  { title: "Serial No", value: "20060049", width: "w-[100px]" },
  { title: "SystemID", value: "104", width: "w-[100px]" },
];

function ContractGrid(): ReactElement {
  return (
    <section className="ml-3 mr-6 mt-[5px] h-[101px] border border-black bg-[#a8a8a8] pt-px">
      <table className="w-[860px] table-fixed border-collapse font-['Roboto','Noto_Sans_Thai','Noto_Sans',sans-serif] text-[12px] leading-4">
        <thead>
          <tr className="h-5 bg-linear-to-b from-[#fbfdfc] to-[#eceeee]">
            <th className="w-10 border-r border-[#b0b0b0]" />
            {columns.map((c) => (
              <th key={c.title} className={`whitespace-nowrap border-r border-[#dcdcdc] p-0 pl-[7px] text-left font-normal ${c.width}`}>
                {c.title}
              </th>
            ))}
          </tr>
        </thead>
        <tbody>
          <tr className="h-[22px] bg-[#3399fa] text-[#e6fbff]">
            <td className="border-y border-r border-[#5d9fb5] bg-[#8fd6f6] pl-2">
              <svg viewBox="0 0 5 10" className="h-[10px] w-[5px]">
                <path d="M0 0l5 5-5 5z" />
              </svg>
            </td>
            {columns.map((c) => (
              <td key={c.title} className="whitespace-nowrap border-r border-[#a0a0a0] p-0 pl-[3px] font-light">
                {c.value}
              </td>
            ))}
          </tr>
        </tbody>
      </table>
      <p className="pr-[22px] text-center text-[35px] font-semibold leading-[46px] text-[#ee1111] [text-shadow:1px_1px_1px_#7a3030]">
        กรอกรายละเอียดต่างๆให้ครบถ้วน
      </p>
    </section>
  );
}

function Taskbar(): ReactElement {
  return (
    <footer className="relative flex h-[30px] items-center border-t border-[#3a4c60] bg-linear-to-r from-[#8092a8] via-[#a0bed8] via-6% to-[#a0bed8] pl-[58px] text-[12px] leading-4 text-white">
      <button type="button" aria-label="Start" className="absolute -top-[6px] left-[9px]">
        <svg viewBox="0 0 36 36" className="h-9 w-9">
          <defs>
            <radialGradient id="orb" cx=".5" cy="1" r=".9">
              <stop offset="0" stopColor="#35d0f4" />
              <stop offset=".5" stopColor="#1f6a9c" />
              <stop offset="1" stopColor="#5b86a8" />
            </radialGradient>
          </defs>
          <circle cx="18" cy="18" r="17.500" fill="url(#orb)" stroke="#1f415e" />
          <path d="M10 9c3-2 5-2 8-1l-2 8c-3-1-5-1-8 1z" fill="#f0622b" />
          <path d="M19 9c3 1 5 1 8-1l-2 8c-3 2-5 2-8 1z" fill="#9ac63a" />
          <path d="M8 18c3-2 5-2 8-1l-2 8c-3-1-5-1-8 1z" fill="#5fb4ec" />
          <path d="M17 18c3 1 5 1 8-1l-2 8c-3 2-5 2-8 1z" fill="#fbd03c" />
          <path d="M2 15C4-1 32-1 34 15c-9-4-22-4-32 0z" fill="#fff" opacity=".25" />
        </svg>
      </button>
      {tasks.map((t) => (
        <button
          key={t.name}
          type="button"
          aria-label={t.name}
          className={`mx-px flex h-[29px] w-11 items-center justify-center rounded-[3px] ${
            t.style === "open"
              ? "border border-[#4d657e] bg-linear-to-br from-[#d6e3ee] to-[#a4bdd5] shadow-[inset_0_0_0_1px_#dfeaf3]"
              : t.style === "alert"
                ? "border border-[#5e5a3c] bg-linear-to-b from-[#f2e86a] to-[#f08e38] shadow-[inset_0_0_0_1px_#f9efb0]"
                : ""
          }`}
        >
          {t.icon}
        </button>
      ))}
      <div className="ml-auto flex h-full items-center bg-linear-to-r from-[#8297ab]/0 to-[#8297ab] to-20% pl-[40px]">
        <span className="mr-[7px] -mt-1">TH</span>
        <svg viewBox="0 0 16 16" className="mr-2 h-4 w-4">
          <circle cx="8" cy="8" r="7" fill="#14249a" stroke="#d4dced" />
          <path d="M5.500 6c0-3.500 5.500-3 5 0-.300 1.500-2.500 1.500-2.500 3.500M8 11v2" fill="none" stroke="#fff" strokeWidth="1.800" />
        </svg>
        <svg viewBox="0 0 9 18" className="mr-[10px] h-[18px] w-[9px]">
          <path d="M2.500 1.500h6v3h-6zM.500 3.500h6v3h-6z" fill="#8297ab" stroke="#fff" />
          <path d="M2 13h6l-3 3z" fill="#fff" />
        </svg>
        <svg viewBox="0 0 8 5" className="mr-3 mt-1 h-[5px] w-2">
          <path d="M0 5h8L4 0z" fill="#fff" />
        </svg>
        <svg viewBox="0 0 16 16" className="mr-2 h-4 w-4">
          <path d="M0 0h16v16H0z" fill="#cf1219" />
          <path d="M3 9C3 3 10 1 13 7c-2-1-3 0-4 1-2-1-4-1-6 1zM9 8l-4 5M7 12c2 1 4 2 6 1" fill="none" stroke="#fff" strokeWidth="1.300" />
        </svg>
        <svg viewBox="0 0 16 14" className="mr-[33px] h-[14px] w-4">
          <path d="M1 4h3l4-3v12l-4-3H1z" fill="#fff" />
          <path d="M10 4c1 2 1 4 0 6M12 3c2 3 2 6 0 8M14 1c2 4 2 8 0 12" fill="none" stroke="#e4ebf1" />
        </svg>
        <time>11:21</time>
        <button type="button" aria-label="Show desktop" className="ml-[25px] h-full w-[15px] border border-[#5a6a7c] bg-linear-to-br from-[#aab6c2] to-[#5f7083]" />
      </div>
    </footer>
  );
}

export default function App(): ReactElement {
  return (
    <div className="flex min-h-screen flex-col bg-[#f8fcf9] font-['Noto_Sans','Noto_Sans_Thai',sans-serif] text-black">
      <TopBars />
      <main className="flex-1 border-l-2 border-r-2 border-l-[#8d8f8f] border-r-[#a8aaaa] bg-linear-to-b from-[#5a524f] from-[129px] to-[#f8fcf9] to-[129px] pb-[30px] pl-[90px] pr-[158px] pt-[9px]">
        <section className="rounded-t-[6px] border border-[#10283c] bg-[#b4d0ea] px-[7px] pb-[7px] shadow-[inset_0_0_0_1px_#d8e8f6]">
          <header className="-mx-[6px] flex h-[28px] items-center rounded-t-[5px] border-t border-white bg-linear-to-b from-[#94afcc] to-[#b6cfe6] pl-[10px] pr-[9px] pt-[5px]">
            <svg viewBox="0 0 14 14" className="h-[14px] w-[14px]">
              <path d="M5.500 1.500h7v7h-7z" fill="#f7cf45" stroke="#c3962a" />
              <path d="M.500 4.500h4v4h-4z" fill="#c8321f" stroke="#8a1d10" />
              <path d="M5.500 9.500h5v3h-5z" fill="#4a86dc" stroke="#2b5cae" />
            </svg>
            <h2 className="ml-1 text-[12px] leading-4">สัญญาบริการ</h2>
            <button type="button" aria-label="ปิด" className={`ml-auto ${closeCaption}`}>
              <CloseGlyph />
            </button>
          </header>
          <div className="bg-[#cfb287] pb-3">
            <ContractForm />
            <ContractGrid />
          </div>
        </section>
      </main>
      <Taskbar />
    </div>
  );
}
